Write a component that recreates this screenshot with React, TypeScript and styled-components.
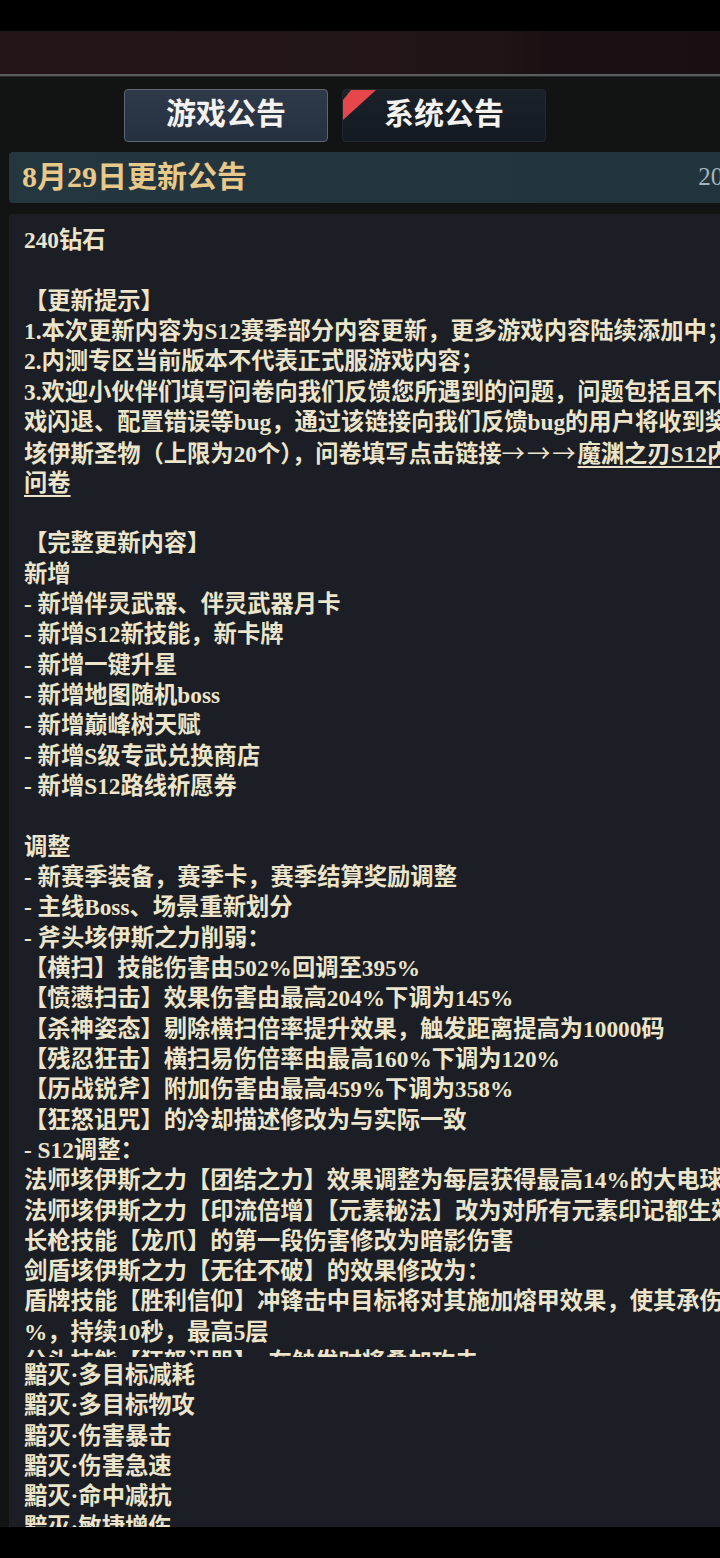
import React from "react";
import styled, { createGlobalStyle } from "styled-components";

const GlobalStyle = createGlobalStyle`
	html,
	body {
		margin: 0;
		padding: 0;
		background: #000;
	}
	body {
		font-family: "Liberation Serif", "Noto Sans CJK SC", serif;
		overflow: hidden;
	}
`;

const Screen = styled.div`
	width: 720px;
	height: 1558px;
	display: flex;
	flex-direction: column;
	overflow: hidden;
	background: #121313;
`;

const StatusBar = styled.div`
	flex: none;
	height: 31px;
	background: #000;
`;

const HeaderBand = styled.div`
	flex: none;
	height: 43px;
	background: linear-gradient(
		90deg,
		#231515 0%,
		#211414 70%,
		#1a0f12 76%,
		#190e12 100%
	);
`;

const Divider = styled.div`
	flex: none;
	height: 2px;
	background: #5a5d5f;
	border-bottom: 1px solid #2a2c2c;
`;

const Body = styled.div`
	flex: 1;
	min-height: 0;
	display: flex;
	flex-direction: column;
	overflow: hidden;
	padding-top: 12px;
`;

const TabRow = styled.div`
	display: flex;
	gap: 14px;
	padding-left: 124px;
`;

const Tab = styled.div<{ $active?: boolean }>`
	position: relative;
	box-sizing: border-box;
	width: 204px;
	height: 53px;
	padding-bottom: 9px;
	display: flex;
	align-items: center;
	justify-content: center;
	overflow: hidden;
	border-radius: 4px;
	border: 1px solid ${(p) => (p.$active ? "#5e6672" : "#222931")};
	background: ${(p) =>
		p.$active
			? "linear-gradient(180deg, #2e3949 0%, #253041 100%)"
			: "linear-gradient(180deg, #1a2129 0%, #141a21 100%)"};
	color: #f4f2ee;
	font-family: "Noto Sans CJK SC", sans-serif;
	font-size: 30px;
	font-weight: 700;
`;

const TabFlag = styled.svg`
	position: absolute;
	top: 0;
	left: 0;
`;

const TitleBar = styled.div`
	box-sizing: border-box;
	flex: none;
	width: 820px;
	height: 51px;
	margin: 10px 0 0 9px;
	padding: 0 14px 8px 13px;
	display: flex;
	align-items: center;
	justify-content: space-between;
	border-radius: 4px;
	background: linear-gradient(90deg, #24373f 0%, #21343e 100%);
`;

const TitleText = styled.div`
	color: #e9c989;
	font-family: "Liberation Serif", "Noto Sans CJK SC", serif;
	font-size: 30px;
	font-weight: 700;
`;

const DateText = styled.div`
	color: #a6b3bd;
	font-family: "Liberation Serif", serif;
	font-size: 25px;
	padding-top: 6px;
`;

const Panel = styled.div`
	box-sizing: border-box;
	flex: 1;
	width: 960px;
	margin: 11px 0 0 9px;
	padding: 11px 0 0 15px;
	border-radius: 4px 4px 0 0;
	background: #1b1e24;
	color: #ece5cb;
	font-family: "Liberation Serif", "Noto Sans CJK SC", serif;
	font-size: 23.3px;
	font-weight: 700;
`;

const Line = styled.div`
	height: 30.33px;
	line-height: 30.33px;
	white-space: pre;
`;

const ClippedRow = styled.div`
	height: 10px;
	margin-bottom: 3px;
	overflow: hidden;
`;

const Link = styled.span`
	text-decoration: underline;
	text-underline-offset: 4px;
	text-decoration-thickness: 2px;
`;

const Arrows = styled.span`
	font-family: "Noto Sans CJK SC", sans-serif;
	font-weight: 400;
	letter-spacing: 2px;
`;

const NavBar = styled.div`
	flex: none;
	height: 31px;
	background: #000;
`;

const lines: React.ReactNode[] = [
	"240钻石",
	"",
	"【更新提示】",
	"1.本次更新内容为S12赛季部分内容更新，更多游戏内容陆续添加中；",
	"2.内测专区当前版本不代表正式服游戏内容；",
	"3.欢迎小伙伴们填写问卷向我们反馈您所遇到的问题，问题包括且不限于游",
	"戏闪退、配置错误等bug，通过该链接向我们反馈bug的用户将收到奖励",
	<>
		垓伊斯圣物（上限为20个），问卷填写点击链接
		<Arrows>→→→</Arrows>
		<Link>魔渊之刃S12内测调查</Link>
	</>,
	<Link>问卷</Link>,
	"",
	"【完整更新内容】",
	"新增",
	"- 新增伴灵武器、伴灵武器月卡",
	"- 新增S12新技能，新卡牌",
	"- 新增一键升星",
	"- 新增地图随机boss",
	"- 新增巅峰树天赋",
	"- 新增S级专武兑换商店",
	"- 新增S12路线祈愿券",
	"",
	"调整",
	"- 新赛季装备，赛季卡，赛季结算奖励调整",
	"- 主线Boss、场景重新划分",
	"- 斧头垓伊斯之力削弱：",
	"【横扫】技能伤害由502%回调至395%",
	"【愤懑扫击】效果伤害由最高204%下调为145%",
	"【杀神姿态】剔除横扫倍率提升效果，触发距离提高为10000码",
	"【残忍狂击】横扫易伤倍率由最高160%下调为120%",
	"【历战锐斧】附加伤害由最高459%下调为358%",
	"【狂怒诅咒】的冷却描述修改为与实际一致",
	"- S12调整：",
	"法师垓伊斯之力【团结之力】效果调整为每层获得最高14%的大电球伤害加成",
	"法师垓伊斯之力【印流倍增】【元素秘法】改为对所有元素印记都生效",
	"长枪技能【龙爪】的第一段伤害修改为暗影伤害",
	"剑盾垓伊斯之力【无往不破】的效果修改为：",
	"盾牌技能【胜利信仰】冲锋击中目标将对其施加熔甲效果，使其承伤提高10",
	"%，持续10秒，最高5层",
];

const afterCut = [
	"黯灭·多目标减耗",
	"黯灭·多目标物攻",
	"黯灭·伤害暴击",
	"黯灭·伤害急速",
	"黯灭·命中减抗",
	"黯灭·敏捷增伤",
];

export default function App() {
	return (
		<>
			<GlobalStyle />
			<Screen>
				<StatusBar />
				<HeaderBand />
				<Divider />
				<Body>
					<TabRow>
						<Tab $active>游戏公告</Tab>
						<Tab>
							<TabFlag width="36" height="32" viewBox="0 0 36 32">
								<polygon points="8,0 33,0 0,30 0,10" fill="#e5474a" />
							</TabFlag>
							系统公告
						</Tab>
					</TabRow>
					<TitleBar>
						<TitleText>8月29日更新公告</TitleText>
						<DateText>2024-08-29</DateText>
					</TitleBar>
					<Panel>
						{lines.map((l, i) => (
							<Line key={i}>{l}</Line>
						))}
						<ClippedRow>
							<Line>分头技能【狂怒诅咒】，在触发时将叠加攻击</Line>
						</ClippedRow>
						{afterCut.map((l, i) => (
							<Line key={i}>{l}</Line>
						))}
					</Panel>
				</Body>
				<NavBar />
			</Screen>
		</>
	);
}
